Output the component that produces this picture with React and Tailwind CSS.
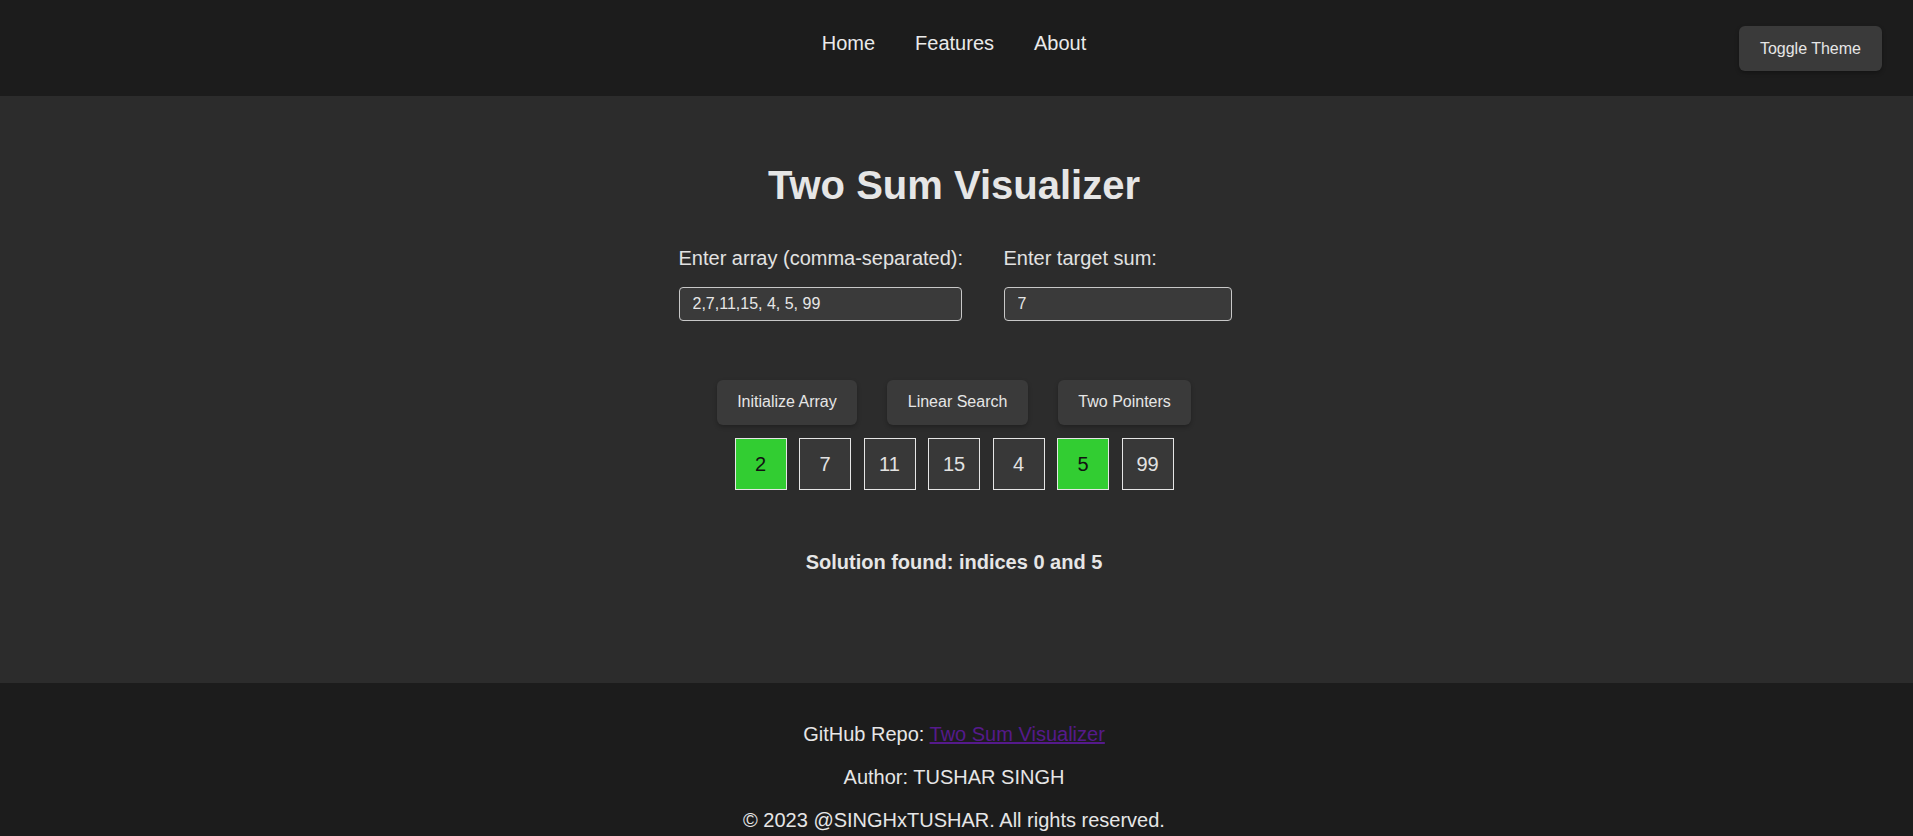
import React from "react";

const cells = [
  { v: 2, hit: true },
  { v: 7 },
  { v: 11 },
  { v: 15 },
  { v: 4 },
  { v: 5, hit: true },
  { v: 99 },
];

export default function App() {
  return (
    <div className="min-h-screen bg-[#2c2c2c] text-[#e2e2e2] font-['Liberation_Sans',Arial,sans-serif]">
      <header className="relative h-[96px] bg-[#1c1c1c]">
        <nav className="flex justify-center gap-[40px] pt-[32px] pr-[5px] text-[20px] leading-[23px] text-[#eaeaea]">
          <a className="cursor-pointer">Home</a>
          <a className="cursor-pointer">Features</a>
          <a className="cursor-pointer">About</a>
        </nav>
        <button className="absolute right-[31px] top-[26px] h-[45px] px-[21px] rounded-[6px] bg-[#3a3a3a] text-[16px] leading-[18px] text-[#e6e6e6] shadow-[0_2px_4px_rgba(0,0,0,0.3)]">
          Toggle Theme
        </button>
      </header>

      <main className="h-[587px] pr-[5px] flex flex-col items-center">
        <h1 className="mt-[66px] text-[40px] leading-[46px] font-bold text-[#e6e6e6]">
          Two Sum Visualizer
        </h1>

        <div className="mt-[39px] ml-[2px] flex gap-[42px]">
          <div className="flex flex-col w-[283px]">
            <label className="text-[20px] leading-[23px] whitespace-nowrap">
              Enter array (comma-separated):
            </label>
            <input
              readOnly
              value="2,7,11,15, 4, 5, 99"
              className="mt-[16.5px] h-[34px] w-full rounded-[4px] border border-[#c8c8c8] bg-[#3a3a3a] pl-[13px] text-[16px] text-[#e6e6e6] outline-none"
            />
          </div>
          <div className="flex flex-col w-[228px]">
            <label className="text-[20px] leading-[23px] whitespace-nowrap">
              Enter target sum:
            </label>
            <input
              readOnly
              value="7"
              className="mt-[16.5px] h-[34px] w-full rounded-[4px] border border-[#c8c8c8] bg-[#3a3a3a] pl-[13px] text-[16px] text-[#e6e6e6] outline-none"
            />
          </div>
        </div>

        <div className="mt-[59px] flex gap-[30px]">
          {["Initialize Array", "Linear Search", "Two Pointers"].map((t) => (
            <button
              key={t}
              className="h-[45px] px-[20.5px] rounded-[6px] bg-[#3a3a3a] text-[16px] leading-[18px] text-[#e6e6e6] shadow-[0_2px_4px_rgba(0,0,0,0.25)]"
            >
              {t}
            </button>
          ))}
        </div>

        <div className="mt-[13px] flex gap-[12.5px]">
          {cells.map((c, i) => (
            <div
              key={i}
              className={
                c.hit
                  ? "w-[52px] h-[52px] flex items-center justify-center border border-[#e6e6e6] bg-[#32cd32] text-[#111] text-[20px]"
                  : "w-[52px] h-[52px] flex items-center justify-center border border-[#e6e6e6] bg-[#383838] text-[#e2e2e2] text-[20px]"
              }
            >
              {c.v}
            </div>
          ))}
        </div>

        <p className="mt-[61px] text-[20px] leading-[23px] font-bold text-[#e6e6e6]">
          Solution found: indices 0 and 5
        </p>
      </main>

      <footer className="bg-[#1c1c1c] py-5 pr-[5px] text-center text-[20px] leading-[23px] text-[#e6e6e6]">
        <p className="my-5">
          GitHub Repo:{" "}
          <a className="text-[#551a8b] underline cursor-pointer">Two Sum Visualizer</a>
        </p>
        <p className="my-5">Author: TUSHAR SINGH</p>
        <p className="my-5">© 2023 @SINGHxTUSHAR. All rights reserved.</p>
      </footer>
    </div>
  );
}
